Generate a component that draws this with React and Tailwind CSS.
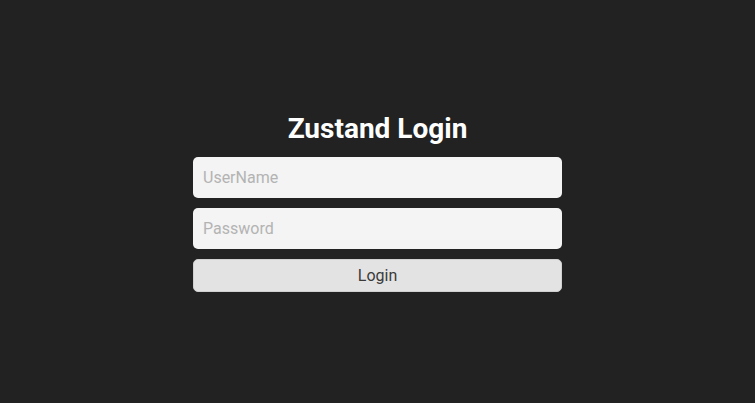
export default function App() {
  return (
    <main className="flex min-h-screen items-center justify-center bg-[#222222] font-['Roboto',sans-serif]">
      <form className="flex w-[369px] flex-col gap-[10px]" onSubmit={(e) => e.preventDefault()}>
        <h1 className="text-center text-[28px] font-bold leading-[36px] text-white">Zustand Login</h1>
        <input
          type="text"
          placeholder="UserName"
          className="h-[41px] rounded-[5px] bg-[#f4f4f4] px-[10px] text-base text-[#333] outline-none placeholder:text-[#b3b3b3]"
        />
        <input
          type="password"
          placeholder="Password"
          className="h-[41px] rounded-[5px] bg-[#f4f4f4] px-[10px] text-base text-[#333] outline-none placeholder:text-[#b3b3b3]"
        />
        <button
          type="submit"
          className="h-[33px] rounded-[5px] border border-[#d0d0d0] bg-[#e3e3e3] text-base text-[#3a3a3a]"
        >
          Login
        </button>
      </form>
    </main>
  )
}
